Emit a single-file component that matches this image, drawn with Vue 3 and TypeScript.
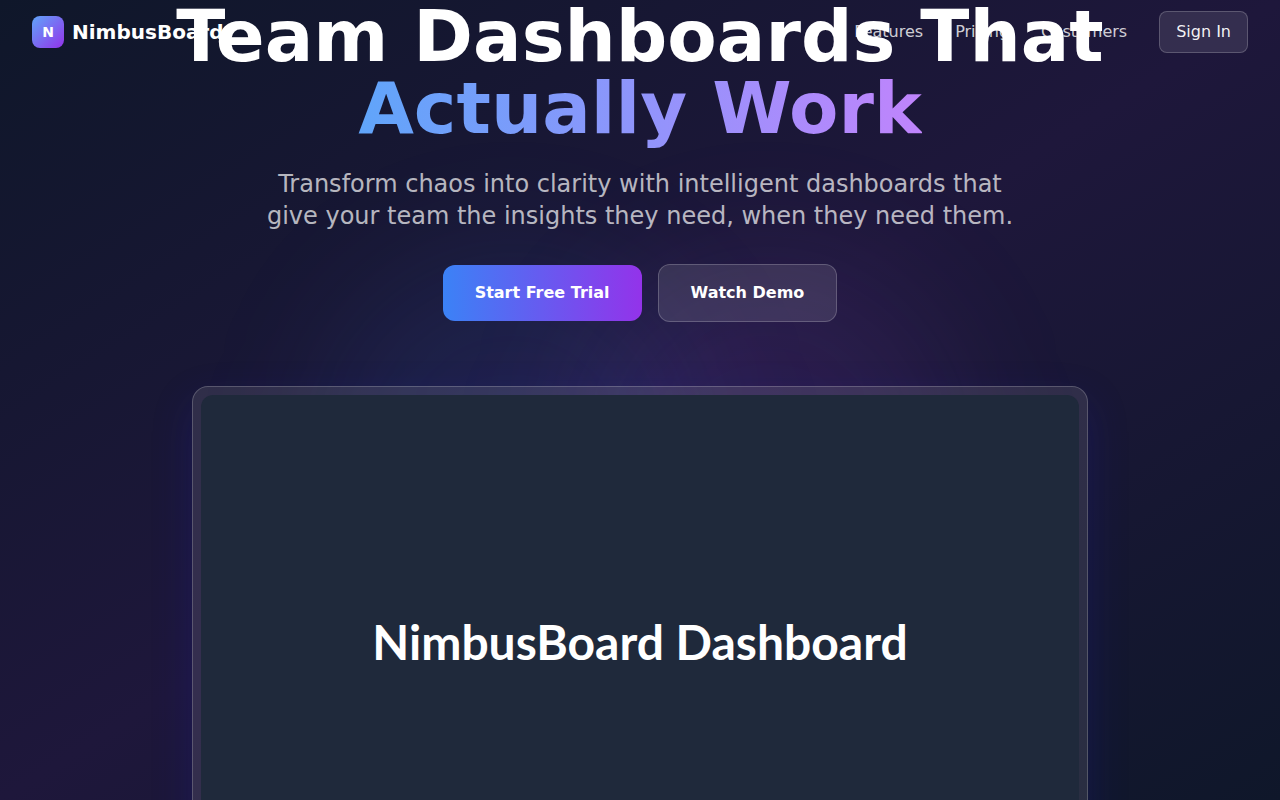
<script setup lang="ts">
interface NavLink {
  label: string
  href: string
}

const links: NavLink[] = [
  { label: 'Features', href: '#features' },
  { label: 'Pricing', href: '#pricing' },
  { label: 'Customers', href: '#customers' },
]
</script>

<template>
  <div class="page">
    <header class="topbar">
      <a class="brand" href="#top">
        <span class="brand-mark">N</span>
        <span class="brand-name">NimbusBoard</span>
      </a>
      <nav class="nav">
        <a v-for="link in links" :key="link.href" class="nav-link" :href="link.href">{{ link.label }}</a>
        <button class="sign-in" type="button">Sign In</button>
      </nav>
    </header>

    <main class="hero">
      <div class="glow glow-blue"></div>
      <div class="glow glow-purple"></div>
      <div class="content">
        <h1 class="title">
          Team Dashboards That
          <span class="title-accent">Actually Work</span>
        </h1>
        <p class="lead">
          Transform chaos into clarity with intelligent dashboards that give your team the insights they need, when they need them.
        </p>
        <div class="actions">
          <button class="btn btn-primary" type="button">Start Free Trial</button>
          <button class="btn btn-glass" type="button">Watch Demo</button>
        </div>
        <div class="frame">
          <div class="preview">NimbusBoard Dashboard</div>
        </div>
      </div>
    </main>
  </div>
</template>

<style>
body {
  margin: 0;
  background: #0f172a;
}
</style>

<style scoped>
.page {
  position: relative;
  height: 100vh;
  overflow: hidden;
  background: linear-gradient(to bottom right, #0f172a, #1e173b, #0f172a);
  color: #fff;
  font-family: "DejaVu Sans", sans-serif;
  font-size: 16px;
  line-height: 24px;
}

.topbar {
  position: absolute;
  inset: 0 0 auto;
  display: flex;
  align-items: center;
  justify-content: space-between;
  box-sizing: border-box;
  height: 64px;
  padding: 0 32px;
}

.brand {
  display: flex;
  align-items: center;
  gap: 8px;
  color: #fff;
  text-decoration: none;
}

.brand-mark {
  display: grid;
  place-items: center;
  width: 32px;
  height: 32px;
  border-radius: 8px;
  background: linear-gradient(to bottom right, #60a5fa, #9333ea);
  font-size: 14px;
  font-weight: 700;
}

.brand-name {
  font-size: 20px;
  font-weight: 700;
}

.nav {
  display: flex;
  align-items: center;
  gap: 32px;
}

.nav-link {
  color: rgba(255, 255, 255, 0.8);
  text-decoration: none;
}

.sign-in {
  padding: 8px 16px;
  border: 1px solid rgba(255, 255, 255, 0.2);
  border-radius: 8px;
  background: rgba(255, 255, 255, 0.1);
  color: rgba(255, 255, 255, 0.95);
  font: inherit;
  cursor: pointer;
}

.glow {
  position: absolute;
  top: 32%;
  width: 384px;
  height: 384px;
  border-radius: 50%;
  filter: blur(64px);
}

.glow-blue {
  left: 25%;
  background: rgba(59, 130, 246, 0.1);
}

.glow-purple {
  right: 25%;
  background: rgba(168, 85, 247, 0.1);
}

.content {
  position: relative;
  display: flex;
  flex-direction: column;
  align-items: center;
  max-width: 1024px;
  margin: 0 auto;
  text-align: center;
}

.title {
  margin: 0 0 16px;
  font-size: 72px;
  font-weight: 700;
  line-height: 72px;
}

.title-accent {
  display: block;
  width: fit-content;
  margin: 0 auto;
  padding-bottom: 8px;
  background: linear-gradient(to right, #60a5fa, #c084fc);
  background-clip: text;
  -webkit-background-clip: text;
  color: transparent;
}

.lead {
  max-width: 768px;
  margin: 0 0 32px;
  color: rgba(255, 255, 255, 0.7);
  font-size: 24px;
  line-height: 32px;
}

.actions {
  display: flex;
  align-items: center;
  gap: 16px;
  margin-bottom: 64px;
}

.btn {
  padding: 16px 32px;
  border: 0;
  border-radius: 12px;
  color: #fff;
  font: inherit;
  font-weight: 600;
  cursor: pointer;
}

.btn-primary {
  background: linear-gradient(to right, #3b82f6, #9333ea);
}

.btn-glass {
  border: 1px solid rgba(255, 255, 255, 0.2);
  background: rgba(255, 255, 255, 0.11);
}

.frame {
  box-sizing: border-box;
  width: 100%;
  max-width: 896px;
  padding: 8px;
  border: 1px solid rgba(255, 255, 255, 0.2);
  border-radius: 16px;
  background: rgba(255, 255, 255, 0.1);
  box-shadow: 0 16px 40px rgba(30, 30, 180, 0.24);
}

.preview {
  display: grid;
  place-items: center;
  aspect-ratio: 16 / 9;
  border-radius: 12px;
  background: #1f293b;
  font-family: Lato, sans-serif;
  font-size: 48px;
  font-weight: 700;
}
</style>
